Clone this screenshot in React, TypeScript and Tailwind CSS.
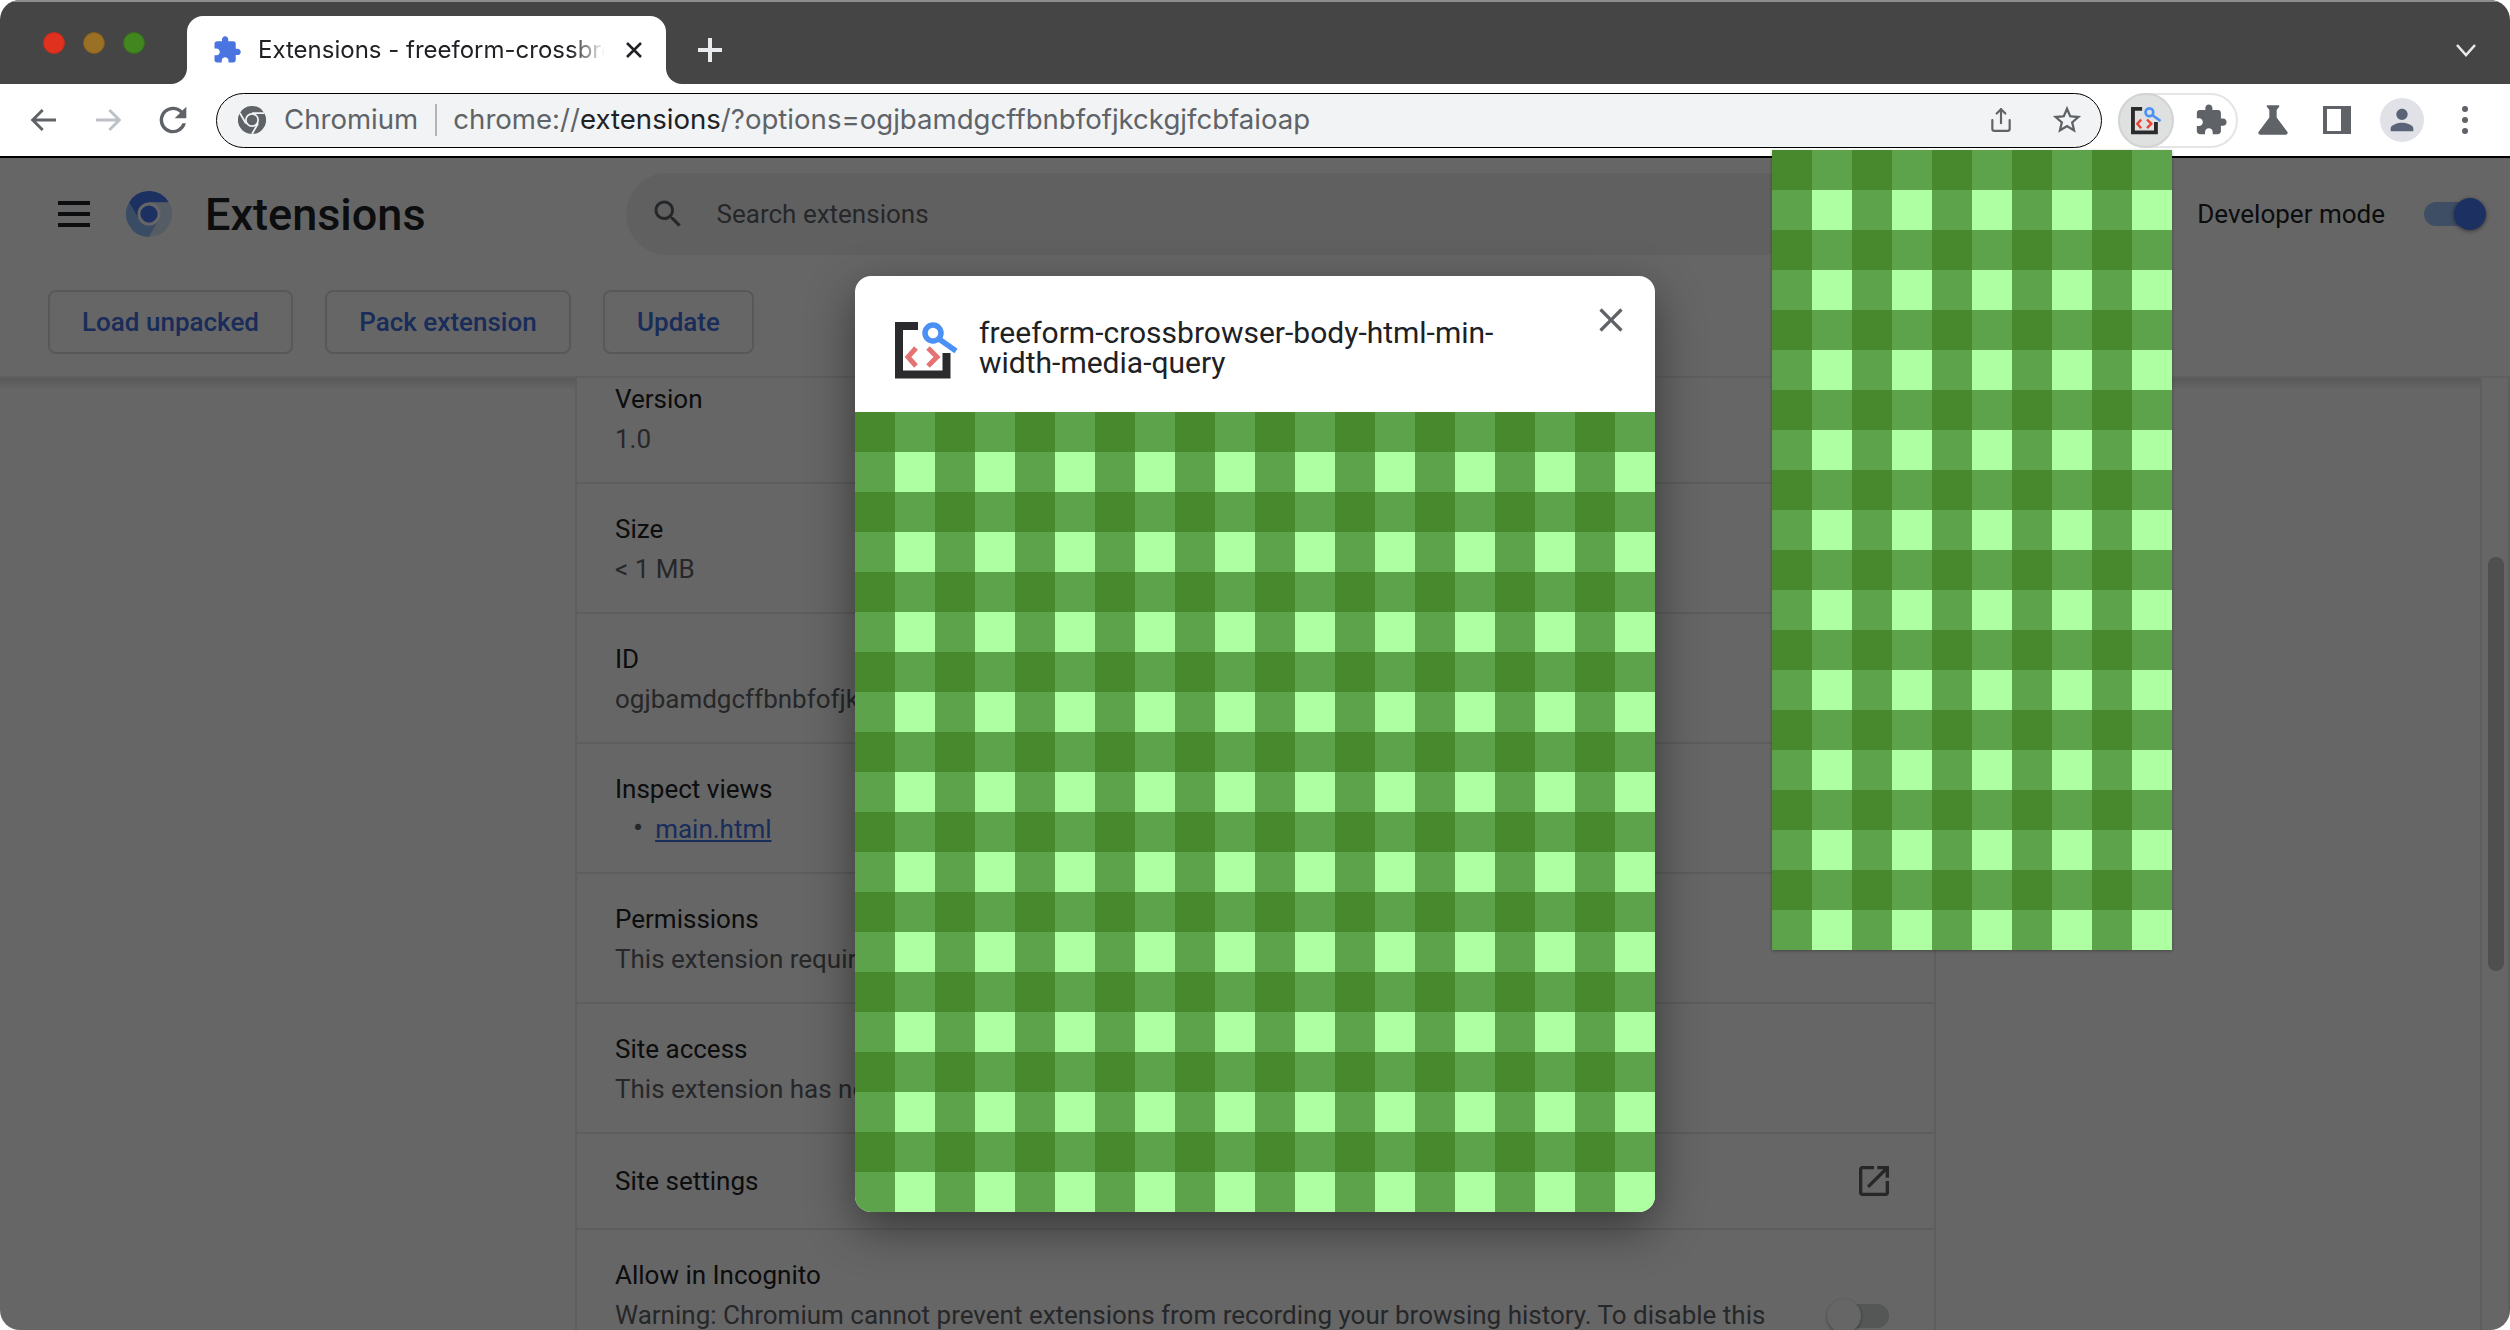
import React from 'react';
import { Share } from 'lucide-react';

const PUZZLE = 'M20.5 11H19V7c0-1.1-.9-2-2-2h-4V3.5C13 2.12 11.88 1 10.5 1S8 2.12 8 3.5V5H4c-1.1 0-1.99.9-1.99 2v3.8H3.5c1.49 0 2.7 1.21 2.7 2.7s-1.21 2.7-2.7 2.7H2V20c0 1.1.9 2 2 2h3.8v-1.5c0-1.49 1.21-2.7 2.7-2.7 1.49 0 2.7 1.21 2.7 2.7V22H17c1.1 0 2-.9 2-2v-4h1.5c1.38 0 2.5-1.12 2.5-2.5S21.88 11 20.5 11z';
const CLOSE = 'M19 6.41 17.59 5 12 10.59 6.41 5 5 6.41 10.59 12 5 17.59 6.41 19 12 13.41 17.59 19 19 17.59 13.41 12z';

const Icon = ({ d, className }: { d: string; className?: string }) => (
  <svg viewBox="0 0 24 24" fill="currentColor" className={className}>
    <path d={d} />
  </svg>
);

const ChromeMark = ({ top, left, right, ring, core, seam, className }: { top: string; left: string; right: string; ring: string; core: string; seam?: string; className?: string }) => (
  <svg viewBox="0 0 48 48" className={className}>
    <path d="M24 24 13.6 30 3.2 12A24 24 0 0 1 44.8 12H24z" fill={top} />
    <path d="M24 24V12H44.8A24 24 0 0 1 24 48L34.4 30z" fill={right} />
    <path d="M24 24 34.4 30 24 48A24 24 0 0 1 3.2 12L13.6 30z" fill={left} />
    {seam && <path d="M44.8 12H24M24 48 34.4 30M3.2 12 13.6 30" stroke={seam} strokeWidth="3" fill="none" />}
    <circle cx="24" cy="24" r="12" fill={ring} />
    <circle cx="24" cy="24" r="9" fill={core} />
  </svg>
);

const ExtensionLogo = ({ className, red }: { className?: string; red: string }) => (
  <svg viewBox="0 0 64 62" className={className}>
    <path d="M23 8H4V56.5H51.5V35" fill="none" stroke="#2b2b2e" strokeWidth="8" />
    <circle cx="38" cy="15" r="8" fill="none" stroke="#4a90f5" strokeWidth="5.5" />
    <path d="M44 21 61 33" stroke="#4a90f5" strokeWidth="5.5" />
    <path d="M21 30 13 39l8 9M33 30l9 9-9 9" fill="none" stroke={red} strokeWidth="5" />
  </svg>
);

const Gingham = ({ id, className }: { id: string; className?: string }) => (
  <svg className={className} width="100%" height="100%">
    <defs>
      <pattern id={id} width="80" height="80" patternUnits="userSpaceOnUse">
        <rect width="80" height="80" fill="#5ca34b" />
        <rect width="40" height="40" fill="#48892e" />
        <rect x="40" y="40" width="40" height="40" fill="#adffa2" />
      </pattern>
    </defs>
    <rect width="100%" height="100%" fill={`url(#${id})`} />
  </svg>
);

const Detail = ({ label, children, first }: { label: string; children: React.ReactNode; first?: boolean }) => (
  <div className={`px-[38px] flex flex-col justify-end pb-[23px] border-b-2 border-[#e8e8e8] ${first ? 'h-[106px]' : 'h-[130px]'}`}>
    <div className="text-[#202124] leading-[40px]">{label}</div>
    <div className="text-[#5f6368] leading-[40px] whitespace-nowrap">{children}</div>
  </div>
);

const ExtensionsPage = () => (
  <div className="relative flex-1 min-h-0 flex flex-col bg-white font-['Roboto',sans-serif] text-[26px]">
    <header className="relative z-10 h-[220px] bg-white border-b-2 border-[#eeeeee]">
      <div className="flex items-center h-[112px]">
        <div className="ml-[58px] w-[32px] flex flex-col gap-[7px]">
          <div className="h-[4px] bg-[#202124]" />
          <div className="h-[4px] bg-[#202124]" />
          <div className="h-[4px] bg-[#202124]" />
        </div>
        <ChromeMark className="ml-[36px] w-[46px] h-[46px]" top="#4678f5" left="#91bdf8" right="#d4e6f8" ring="#fff" core="#4678f5" />
        <h1 className="ml-[33px] text-[45px] font-medium text-[#202124] leading-none">Extensions</h1>
        <div className="ml-[200px] w-[1300px] h-[82px] rounded-full bg-[#f1f1f1] flex items-center pl-[24px]">
          <svg viewBox="0 0 24 24" fill="#5f6368" className="w-[36px] h-[36px]">
            <path d="M15.5 14h-.79l-.28-.27C15.41 12.59 16 11.11 16 9.5 16 5.91 13.09 3 9.5 3S3 5.91 3 9.5 5.91 16 9.5 16c1.61 0 3.09-.59 4.23-1.57l.27.28v.79l5 4.99L20.49 19l-4.99-5zm-6 0C7.01 14 5 11.99 5 9.5S7.01 5 9.5 5 14 7.01 14 9.5 11.99 14 9.5 14z" />
          </svg>
          <span className="ml-[31px] text-[#5f6368]">Search extensions</span>
        </div>
      </div>
      <div className="flex gap-[32px] pl-[48px] mt-[20px] font-medium text-[#3f6fe0]">
        <button className="h-[64px] w-[245px] rounded-[8px] border-2 border-[#dadce0]">Load unpacked</button>
        <button className="h-[64px] w-[246px] rounded-[8px] border-2 border-[#dadce0]">Pack extension</button>
        <button className="h-[64px] w-[151px] rounded-[8px] border-2 border-[#dadce0]">Update</button>
      </div>
      <div className="absolute right-[30px] top-[40px] flex items-center h-[32px]">
        <span className="text-[#202124]">Developer mode</span>
        <div className="relative ml-[39px] w-[56px] h-[24px] rounded-full bg-[#9bc4fb]">
          <div className="absolute right-[-6px] top-[-4px] w-[32px] h-[32px] rounded-full bg-[#4678f5] shadow-[0_1px_4px_rgba(0,0,0,0.5)]" />
        </div>
      </div>
    </header>

    <div className="flex-1 min-h-0 flex overflow-hidden">
      <div className="w-[575px] shrink-0">
        <div className="h-[12px] bg-gradient-to-b from-[#e0e0e0] to-white" />
      </div>
      <div className="w-[1361px] border-x-2 border-[#ececec] shrink-0">
        <Detail label="Version" first>1.0</Detail>
        <Detail label="Size">&lt; 1 MB</Detail>
        <Detail label="ID">ogjbamdgcffbnbfofjkckgjfcbfaioap</Detail>
        <Detail label="Inspect views">
          <span className="ml-[18px] mr-[12px] text-[#5f6368] text-[30px] leading-none">•</span>
          <span className="underline text-[#3f6fe0]">main.html</span>
        </Detail>
        <Detail label="Permissions">This extension requires no special permissions.</Detail>
        <Detail label="Site access">This extension has no additional site access.</Detail>
        <div className="h-[96px] px-[38px] flex items-center justify-between border-b-2 border-[#e8e8e8]">
          <span className="text-[#202124]">Site settings</span>
          <svg viewBox="0 0 24 24" fill="#5f6368" className="w-[40px] h-[40px] mr-[2px]">
            <path d="M19 19H5V5h7V3H5c-1.11 0-2 .9-2 2v14c0 1.1.89 2 2 2h14c1.1 0 2-.9 2-2v-7h-2v7zM14 3v2h3.59l-9.83 9.83 1.41 1.41L19 6.41V10h2V3h-7z" />
          </svg>
        </div>
        <div className="relative px-[38px] pt-[25px]">
          <div className="text-[#202124] leading-[40px]">Allow in Incognito</div>
          <div className="text-[#5f6368] leading-[40px] whitespace-nowrap">Warning: Chromium cannot prevent extensions from recording your browsing history. To disable this</div>
          <div className="absolute left-[1250px] top-[74px] w-[62px] h-[24px]">
            <div className="absolute right-0 top-0 w-[52px] h-[24px] rounded-full bg-[#d5d6d8]" />
            <div className="absolute left-0 top-[-5px] w-[34px] h-[34px] rounded-full bg-white shadow-[0_1px_3px_rgba(0,0,0,0.4)]" />
          </div>
        </div>
      </div>
      <div className="flex-1">
        <div className="h-[12px] bg-gradient-to-b from-[#e0e0e0] to-white" />
      </div>
      <div className="w-[30px] shrink-0 border-x-2 border-[#ececec] pl-[6px] pt-[179px]">
        <div className="w-[16px] h-[414px] rounded-full bg-[#c5c5c5]" />
      </div>
    </div>

    {/* dialog scrim */}
    <div className="absolute inset-0 z-20 bg-black/60" />

    <div className="absolute z-30 left-[855px] top-[118px] w-[800px] rounded-[16px] overflow-hidden bg-white shadow-[0_16px_48px_rgba(0,0,0,0.45)]">
      <div className="h-[136px] flex items-center pl-[40px]">
        <ExtensionLogo red="#e57373" className="w-[64px] h-[62px] shrink-0 mt-[10px] blur-[0.6px]" />
        <div className="ml-[20px] w-[540px] text-[30px] leading-[30px] text-[#202124] mt-[8px]">
          freeform-crossbrowser-body-html-min-width-media-query
        </div>
        <Icon d={CLOSE} className="ml-auto mr-[24px] self-start mt-[24px] w-[40px] h-[40px] text-[#5f6368]" />
      </div>
      <div className="h-[800px]">
        <Gingham id="modal-check" className="block" />
      </div>
    </div>
  </div>
);

export default function App() {
  return (
    <div className="relative w-[2510px] h-[1330px] overflow-hidden bg-white">
      <div className="relative w-full h-full flex flex-col rounded-[20px] overflow-hidden">
        <div className="h-[84px] shrink-0 bg-[#454545] border-t-2 border-[#8e8e8e] flex">
          <div className="w-[187px] shrink-0 flex items-center gap-[18px] pl-[43px]">
            <div className="w-[22px] h-[22px] rounded-full bg-[#e0301e] border border-[#c42c1c]" />
            <div className="w-[22px] h-[22px] rounded-full bg-[#9a7025] border border-[#7f5b1e]" />
            <div className="w-[22px] h-[22px] rounded-full bg-[#41861f] border border-[#357018]" />
          </div>
          <div className="relative mt-[14px] w-[479px] bg-white rounded-t-[16px] flex items-center pl-[25px] font-['Inter',sans-serif] text-[24px] text-[#202124]">
            <div className="absolute left-[-16px] bottom-0 w-[16px] h-[16px] bg-white">
              <div className="w-full h-full bg-[#454545] rounded-br-[16px]" />
            </div>
            <div className="absolute right-[-16px] bottom-0 w-[16px] h-[16px] bg-white">
              <div className="w-full h-full bg-[#454545] rounded-bl-[16px]" />
            </div>
            <Icon d={PUZZLE} className="w-[30px] h-[30px] text-[#4a74e0] shrink-0" />
            <div className="ml-[16px] w-[347px] overflow-hidden whitespace-nowrap [mask-image:linear-gradient(to_right,black_90%,transparent)]">
              Extensions - freeform-crossbrowser-body-html-min-width-media-query
            </div>
            <svg viewBox="0 0 26 26" fill="none" stroke="#202124" strokeWidth="2.6" className="ml-[16px] w-[26px] h-[26px] shrink-0">
              <path d="M6 6l14 14M20 6 6 20" />
            </svg>
          </div>
          <svg viewBox="0 0 24 24" className="ml-[32px] mt-[36px] w-[24px] h-[24px]" stroke="#e8eaed" strokeWidth="4">
            <path d="M12 0v24M0 12h24" />
          </svg>
          <svg viewBox="0 0 24 24" fill="none" className="ml-auto mr-[32px] mt-[36px] w-[24px] h-[24px]" stroke="#e8eaed" strokeWidth="2.6">
            <path d="M3 7l9 10 9-10" />
          </svg>
        </div>

        <div className="relative z-40 h-[74px] shrink-0 bg-white border-b-2 border-black flex items-center text-[#5f6368]">
          <div className="w-[216px] shrink-0 flex items-center">
            <svg viewBox="0 0 24 24" fill="none" stroke="#5f6368" strokeWidth="2.2" className="ml-[28px] w-[32px] h-[32px]">
              <path d="M21 12H3.5M11 4.5 3.5 12l7.5 7.5" />
            </svg>
            <svg viewBox="0 0 24 24" fill="none" stroke="#bdc1c6" strokeWidth="2.2" className="ml-[32px] w-[32px] h-[32px]">
              <path d="M3 12h17.5M13 4.5l7.5 7.5-7.5 7.5" />
            </svg>
            <svg viewBox="0 0 24 24" fill="#5f6368" className="ml-[29px] w-[40px] h-[40px]">
              <path d="M17.65 6.35A7.96 7.96 0 0 0 12 4a8 8 0 1 0 7.73 10h-2.08A6 6 0 1 1 12 6c1.66 0 3.14.69 4.22 1.78L13 11h7V4l-2.35 2.35z" />
            </svg>
          </div>
          <div className="w-[1886px] h-[55px] shrink-0 rounded-full bg-[#f1f3f4] border border-black flex items-center pl-[21px] font-['Inter',sans-serif] text-[27.6px]">
            <ChromeMark className="w-[28px] h-[28px]" top="#5f6368" left="#5f6368" right="#5f6368" ring="#f1f3f4" core="#5f6368" seam="#f1f3f4" />
            <span className="ml-[18px]">Chromium</span>
            <div className="ml-[17px] w-[2px] h-[32px] bg-[#b0b3b8]" />
            <span className="ml-[16px] whitespace-nowrap">chrome://<span className="text-[#202124]">extensions</span>/?options=ogjbamdgcffbnbfofjkckgjfcbfaioap</span>
            <Share className="ml-auto w-[26px] h-[34px]" strokeWidth={2} />
            <svg viewBox="0 0 24 24" fill="#5f6368" className="ml-[36px] mr-[17px] w-[34px] h-[34px]">
              <path d="M22 9.24l-7.19-.62L12 2 9.19 8.63 2 9.24l5.46 4.73L5.82 21 12 17.27 18.18 21l-1.63-7.03L22 9.24zM12 15.4l-3.76 2.27 1-4.28-3.32-2.88 4.38-.38L12 6.1l1.71 4.04 4.38.38-3.32 2.88 1 4.28L12 15.4z" />
            </svg>
          </div>
          <div className="ml-[16px] w-[120px] h-[55px] shrink-0 rounded-full border-2 border-[#e5e5e5] flex items-center">
            <div className="-ml-[2px] w-[56px] h-[55px] rounded-full bg-[#dfe1e1] border-2 border-[#d2d4d4] flex items-center justify-center">
              <ExtensionLogo red="#ea4335" className="w-[31px] h-[30px]" />
            </div>
            <Icon d={PUZZLE} className="ml-[20px] w-[34px] h-[34px]" />
          </div>
          <svg viewBox="0 0 24 24" fill="#5f6368" className="ml-[13px] w-[44px] h-[44px] shrink-0">
            <path d="M19.8 18.4 14 10.67V6.5l1.35-1.69c.26-.33.03-.81-.39-.81H9.04c-.42 0-.65.48-.39.81L10 6.5v4.17L4.2 18.4c-.49.66-.02 1.6.8 1.6h14c.82 0 1.29-.94.8-1.6z" />
          </svg>
          <div className="ml-[28px] w-[28px] h-[28px] shrink-0 border-[#5f6368] border-y-[3px] border-l-[4px] border-r-[10px]" />
          <div className="ml-[29px] w-[44px] h-[44px] shrink-0 rounded-full bg-[#e0e2e8] flex items-center justify-center">
            <svg viewBox="0 0 24 24" fill="#5a6378" className="w-[34px] h-[34px]">
              <path d="M12 12c2.21 0 4-1.79 4-4s-1.79-4-4-4-4 1.79-4 4 1.79 4 4 4zm0 2c-2.67 0-8 1.34-8 4v2h16v-2c0-2.66-5.33-4-8-4z" />
            </svg>
          </div>
          <div className="ml-[38px] flex flex-col gap-[5px] shrink-0">
            <div className="w-[6px] h-[6px] rounded-full bg-[#5f6368]" />
            <div className="w-[6px] h-[6px] rounded-full bg-[#5f6368]" />
            <div className="w-[6px] h-[6px] rounded-full bg-[#5f6368]" />
          </div>
        </div>

        <ExtensionsPage />
      </div>

      {/* action popup hangs off the toolbar */}
      <div className="absolute z-50 left-[1772px] top-[150px] w-[400px] h-[800px] shadow-[0_1px_3px_rgba(0,0,0,0.3)]">
        <Gingham id="popup-check" className="block" />
      </div>
    </div>
  );
}
